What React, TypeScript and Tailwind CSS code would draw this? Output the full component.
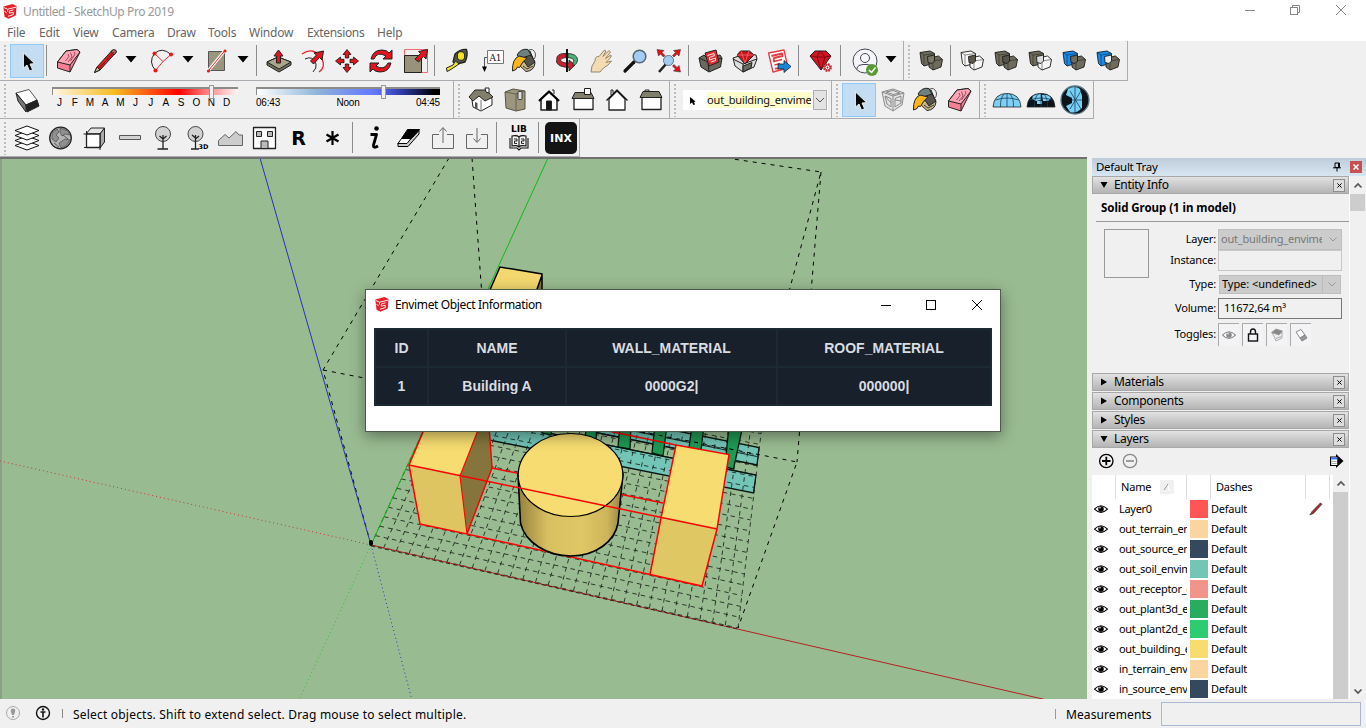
import React from "react";

type Kids = { children?: React.ReactNode };

/* ---------- toolbar primitives ---------- */
function Ico({ c = "", children }: Kids & { c?: string }) {
  return (
    <svg viewBox="0 0 34 34" className={`h-[34px] w-[34px] shrink-0 ${c}`} fill="none" stroke="#222" strokeWidth="1" strokeLinejoin="round">
      {children}
    </svg>
  );
}
function Grip({ c = "" }: { c?: string }) {
  return (
    <svg viewBox="0 0 10 36" className={`h-9 w-[10px] shrink-0 ${c}`}>
      <path d="M5 2V35" stroke="#bdbdbd" strokeWidth="2" strokeDasharray="2 2" />
    </svg>
  );
}
function Sep({ c = "w-2" }: { c?: string }) {
  return (
    <div className={`h-8 shrink-0 pl-0.5 ${c}`}>
      <div className="h-[31px] w-px bg-[#8c8c8c]" />
    </div>
  );
}
function Down({ c = "" }: { c?: string }) {
  return (
    <svg viewBox="0 0 18 20" className={`h-5 w-[18px] shrink-0 ${c}`}>
      <path d="M3.500 5H14.500L9 11.500Z" fill="#000" />
    </svg>
  );
}
const Bar = ({ c, children }: Kids & { c: string }) => (
  <div className={`flex h-full shrink-0 items-center border-r border-b border-[#a9acb0] pt-px ${c}`}>{children}</div>
);

/* ---------- icons ---------- */
const Logo = ({ c }: { c: string }) => (
  <svg viewBox="0 0 14 15" className={c}>
    <path d="M0.300 2.500L9.500 0L13.500 2L12.800 11.500L5.500 14.800L1.500 12.800Z" fill="#e4202a" />
    <path d="M0.800 3.500L4.500 5.200L13 3.200M4.500 5.200V7.500M10.500 5.800L6.300 7V9.200L10.300 8.300V10.600L5 12.300M1.500 7.500L3.500 8.500" stroke="#fff" strokeWidth=".9" fill="none" />
  </svg>
);
const Pointer = ({ c = "" }: { c?: string }) => (
  <div className={`h-[34px] w-[34px] shrink-0 border border-[#90c8f6] bg-[#c4ddf3] ${c}`}>
    <svg viewBox="0 0 32 32" className="h-8 w-8">
      <path d="M12.500 8V23L16 20L18.500 26L21.500 24.700L19 19L23.500 18.600Z" fill="#000" stroke="#fff" strokeWidth=".8" />
    </svg>
  </div>
);
const Eraser = ({ c = "" }: { c?: string }) => (
  <Ico c={c}>
    <path d="M15 7L26 5.500L29 8L19 28L6.500 24V18Z" fill="#f77f95" />
    <path d="M15 7L26 5.500L29 8L19 21L6.500 18Z" fill="#fda3b5" />
    <path d="M19 21V28" />
    <path d="M14.500 17L18 12.500L17 10M17 18L21 13L19.500 8.500M19.500 17L24 10L23 8" stroke="#7c3847" strokeWidth=".8" />
  </Ico>
);
const Bucket = ({ c = "" }: { c?: string }) => (
  <Ico c={c}>
    <ellipse cx="24" cy="11" rx="4.500" ry="5.500" stroke="#555" />
    <path d="M13 9L23 7L28 19Q27 27 19 27.500L12 21Z" fill="#c9b98a" />
    <path d="M10 11Q14 4 21 5.500L25 13L16 18Z" fill="#6f8080" />
    <path d="M15 14L24 11L28 18L21 23Z" fill="#57534a" />
    <path d="M16 22L20 25L26 22" stroke="#3b372c" />
    <path d="M5.500 27Q5 15 12 12L20 14Q16 17 14 21Q13 25 10.500 23Q10 26 5.500 27Z" fill="#fdb515" />
  </Ico>
);
const Arc4 = () => (
  <g fill="#e5131d" stroke="#111" strokeWidth=".8">
    <path d="M17 5.500L21 10.500H18.700V14H15.300V10.500H13Z" />
    <path d="M17 28.500L21 23.500H18.700V20H15.300V23.500H13Z" />
    <path d="M5.500 17L10.500 13V15.300H14V18.700H10.500V21Z" />
    <path d="M28.500 17L23.500 13V15.300H20V18.700H23.500V21Z" />
  </g>
);
function Solids({ a, b, i, c = "" }: { a: string; b: string; i: string; c?: string }) {
  return (
    <Ico c={c}>
      <g stroke="#1c1c18" strokeWidth=".9">
        <path d="M6 8.500L16 7L20.500 9.500V19L10 22L7.500 19.500Z" fill={a} />
        <path d="M15 14L24.500 12L28.500 15.500L27 23L19 26L15 23Z" fill={b} />
        <path d="M6 8.500L10 11L20.500 9.500M10 11V22M15 14L19 17L28.500 15.500M19 17V26" strokeWidth=".5" />
        <path d="M13.500 12.500L20.500 11V17L18 19.500L14 18.500Z" fill={i} />
      </g>
    </Ico>
  );
}
const Globe = ({ c = "", dark = false }: { c?: string; dark?: boolean }) => (
  <Ico c={c}>
    <path d="M3 24Q4 10.500 17 10.500Q30 10.500 31 24Z" fill={dark ? "#0b141a" : "#7fd0f5"} strokeWidth=".8" />
    {dark && <path d="M9 13Q12 11 17 11V17L12 18L8 16ZM18 12Q24 11 27 15L24 18H19ZM13 18H18V21H13Z" fill="#7fd0f5" stroke="none" />}
    <path d="M17 10.500V24M10.500 24Q10 15 14.500 10.500M23.500 24Q24 15 19.500 10.500M5.500 17Q17 13 28.500 17" stroke="#17425a" strokeWidth=".8" />
  </Ico>
);
const Tree = ({ d3 = false }: { d3?: boolean }) => (
  <Ico>
    <circle cx={d3 ? 15.500 : 17} cy="13" r="7.500" fill="#d2d2d2" stroke="#444" />
    <path d={d3 ? "M15.500 14V28M11 28H19M15.500 17L12 14M15.500 18L19 15" : "M17 14V28M11.500 28H22M17 18L13.500 15M17 18L20.500 15"} strokeWidth="1.300" />
    {d3 && <text x="18.500" y="27.500" fontSize="6.500" fontWeight="700" fill="#000" stroke="none" fontFamily="DejaVu Sans, sans-serif">3D</text>}
  </Ico>
);

function Row1() {
  return (
    <div className="flex h-10 items-stretch">
      <Bar c="w-[904px]">
        <Grip />
        <Pointer />
        <Sep c="w-[7px]" />
        <Eraser />
        <Ico c="ml-[3px]">
          <path d="M9 23L24.500 6L28 8.500L12 26L6.500 28.500Z" fill="#d81e25" />
          <path d="M23 7.500L25.500 5.500Q28.500 5.500 28.500 8L26 11Z" fill="#b66" />
          <path d="M9 23L12 26L6.500 28.500Z" fill="#cabf90" />
          <path d="M11 24.500L26 8" stroke="#811" />
        </Ico>
        <Down />
        <Ico c="ml-[5px]">
          <path d="M9.500 9.500Q17 2.500 26 10.500Q27 18 21 23.500Q16 27 10.500 27Q3 18 9.500 9.500" stroke="none" />
          <path d="M9.500 9.500Q17 2.500 26 10.500M9.500 9.500Q3 18 10.500 26.500" />
          <path d="M9.500 9.500L18 17.500L26 10.500M18 17.500L10.500 26.500" stroke="#e03038" />
          <g fill="#e11" stroke="none"><circle cx="9.500" cy="9.500" r="2" /><circle cx="26" cy="10.500" r="2" /><circle cx="10.500" cy="26.500" r="2" /></g>
        </Ico>
        <Down />
        <Ico c="ml-[3px]">
          <rect x="8.500" y="7.500" width="16" height="19" fill="#9a967e" stroke="#555" />
          <path d="M8.500 26.500L24.500 7" stroke="#fff" strokeWidth="3" />
          <path d="M8.500 26.500L24.500 7" stroke="#e22" />
          <g fill="#e11" stroke="none"><circle cx="8.500" cy="27" r="1.600" /><circle cx="25" cy="7" r="1.600" /></g>
        </Ico>
        <Down />
        <Sep c="ml-0.5 w-2" />
        <Ico>
          <path d="M5 18L16 13L29 18V21L17 28L5 21Z" fill="#716d5c" />
          <path d="M5 18L16 13L29 18L17 25Z" fill="#aaa68d" />
          <path d="M16.500 6L21 12H18.500V19H14.500V12H12Z" fill="#e5131d" />
        </Ico>
        <Ico>
          <path d="M6 10Q18 2 26 15Q30 23 23 28" stroke="#e5252d" strokeWidth="1.300" />
          <path d="M9 15Q17 11 20 20Q21 24 17 28" />
          <path d="M27.500 7L26 16L23.500 13.500L17.500 20L14.500 17L20.500 11L18 9Z" fill="#e5131d" />
        </Ico>
        <Ico><Arc4 /></Ico>
        <Ico>
          <g fill="#e5131d">
            <path d="M7 15Q9 6 18 6Q23 6 25 9L28 6V15H19L22 12Q13 7 10 15Z" />
            <path d="M27 19Q25 28 16 28Q11 28 9 25L6 28V19H15L12 22Q20 27 24 19Z" />
          </g>
        </Ico>
        <Ico>
          <rect x="6.500" y="5.500" width="23" height="23" stroke="#ef6b70" />
          <rect x="6.500" y="11.500" width="17" height="17" fill="#97937b" />
          <path d="M29.500 5.500L28 15L25.500 12.500L20.500 18L17 15L22.500 9.500L20.500 7.500Z" fill="#e5131d" />
        </Ico>
        <Sep c="w-[9px]" />
        <Ico>
          <path d="M14 10Q19 5 25.500 5.500Q27.500 11 24 18L16 20L12 18Z" fill="#55554a" strokeWidth="1.300" />
          <ellipse cx="20" cy="12" rx="3.700" ry="4.300" fill="#f3e51c" />
          <path d="M14.500 17L18 20L9 26L6 27.500L5.500 24L12 21Z" fill="#f5e711" />
        </Ico>
        <Ico>
          <rect x="12.500" y="6.500" width="16" height="13" fill="#fff" stroke="#777" />
          <text x="14.500" y="16.500" fontSize="9" fill="#111" stroke="none" fontFamily="DejaVu Serif, serif" textLength="12">A1</text>
          <path d="M12 13.500H9.500V23" stroke="#555" /><path d="M7 22.500H12L9.500 28Z" fill="#000" stroke="none" />
        </Ico>
        <Bucket c="-ml-0.5" />
        <Sep c="w-[9px]" />
        <Ico>
          <path d="M7 13Q9 9 16 9.500V13.500Q11 14 10.500 16Q11 19 19 19V16L25 21L19 27V23.500Q8 23 6.500 18Z" fill="#c9202e" strokeWidth=".8" />
          <path d="M18 9.500Q27 10 27.500 15.500Q27.500 20 23 22V18.500Q24.500 17 23.500 15.500Q22 14 18 13.500Z" fill="#4bb274" strokeWidth=".8" />
          <path d="M17 5V28" stroke="#111" strokeWidth="2" />
        </Ico>
        <Ico>
          <path d="M7 28L8 22L11 17Q11 12 15 12.500L20.500 6L22 7L19 12.500L25 6.500L26.500 8L21.500 14.500L27 11V13L22 18.500L27.500 17Q24 22 19.500 24L16 28Z" fill="#f3dbb4" stroke="#8a7a60" strokeWidth=".9" />
        </Ico>
        <Ico>
          <path d="M16 18L7 27" stroke="#111" strokeWidth="3.200" strokeLinecap="round" />
          <circle cx="21.500" cy="12.500" r="6.300" fill="#a3cdf3" stroke="#526576" strokeWidth="1.500" />
        </Ico>
        <Ico>
          <path d="M14 20L7 28" strokeWidth="2.500" />
          <circle cx="16.500" cy="16.500" r="5" fill="#a3cdf3" stroke="#607487" />
          <g fill="#e5131d" strokeWidth=".5">
            <path d="M5 5.500L12 6.500L10 8.500L13 11.500L11.500 13L8.500 10L6.500 12Z" /><path d="M28.500 5.500L21.500 6.500L23.500 8.500L20.500 11.500L22 13L25 10L27 12Z" />
            <path d="M28.500 28L21.500 27L23.500 25L20.500 22L22 20.500L25 23.500L27 21.500Z" />
          </g>
        </Ico>
        <Sep />
        <Ico>
          <path d="M5 14L10 11L13 14L26 11L28 14L26.500 23L15 28L7 23Z" fill="#6b695d" />
          <path d="M5 14L14 18L28 14M14 18L15 28" />
          <path d="M11 9L22 6L25 18L15 22Z" fill="#e32d34" />
          <path d="M13.500 11.500L20 9.500L20.500 11.500L15.500 13.500V16L21.500 14V16.500L17 18" stroke="#fff" strokeWidth=".9" />
        </Ico>
        <Ico>
          <path d="M5 14L11 12L13 9L28 11L29 15L26 23L15 28L7 22Z" fill="#ddd" />
          <path d="M9 11L12.500 7H21.500L26 11L17 20Z" fill="#c9141e" />
          <path d="M9 11H26M13 7L17 19L21 7" stroke="#fc7a7a" strokeWidth=".7" />
          <path d="M5 15L15 20L29 15M15 20V28" /><path d="M15 22L24 18.500L23 24L15 28Z" fill="#6a6a60" />
        </Ico>
        <Ico>
          <path d="M6.500 9L22 6L26 24L11 28Z" fill="#fff" stroke="#e43b42" strokeWidth="1.300" />
          <path d="M9.500 12L20 9.500L20.500 12L12 14V17.500L20 15.500M12.500 21L18 19.500M13 24.500H17" stroke="#e43b42" strokeWidth="1.800" />
          <path d="M16 20H22V16.500L29 22.500L22 28.500V25H16Z" fill="#1685dc" strokeWidth=".8" />
        </Ico>
        <Sep />
        <Ico>
          <path d="M6 12L11 7H22L27 12L17 26Z" fill="#cd1722" />
          <path d="M6 12L13 13L17 26L21 13L27 12M13 13L16 7L21 13Z" stroke="#78000c" strokeWidth=".8" />
          <circle cx="23.500" cy="23.500" r="3.300" fill="#fff" stroke="#c22a33" strokeWidth="2.200" strokeDasharray="1.700 .9" /><circle cx="23.500" cy="23.500" r="2.600" stroke="#c22a33" /><circle cx="23.500" cy="23.500" r="1" fill="#c22" stroke="none" />
        </Ico>
        <Sep c="w-[10px]" />
        <Ico>
          <circle cx="17" cy="17" r="12" fill="#f6f6f8" stroke="#44475c" />
          <circle cx="17" cy="14" r="4.500" stroke="#44475c" />
          <path d="M9 25.500V24Q10 20.500 15 20.500H19Q24 20.500 25 24" stroke="#44475c" />
          <circle cx="24" cy="26" r="6" fill="#5a9935" stroke="none" />
          <path d="M21 26L23.500 28.500L27.500 23.500" stroke="#fff" strokeWidth="1.500" />
        </Ico>
        <Down />
      </Bar>
      <Bar c="w-[224px]">
        <Grip />
        <Solids a="#6f6c5d" b="#6f6c5d" i="#7d7a69" />
        <Sep c="w-[7px]" />
        <Solids a="#f8f8f8" b="#f8f8f8" i="#5a584b" />
        <Solids a="#6f6c5d" b="#6f6c5d" i="#55534a" />
        <Solids a="#6f6c5d" b="#f8f8f8" i="#ddd" />
        <Solids a="#188bf0" b="#6f6c5d" i="#6f6c5d" />
        <Solids a="#188bf0" b="#6f6c5d" i="#eee" />
      </Bar>
    </div>
  );
}

const months = ["J", "F", "M", "A", "M", "J", "J", "A", "S", "O", "N", "D"];

function Row2() {
  return (
    <div className="flex h-[38px] items-stretch">
      <Bar c="w-[454px]">
        <Grip />
        <Ico>
          <path d="M6 10L19 6.500L27 17L16 22Z" fill="#fff" stroke="#555" />
          <path d="M6 10L16 22V29L8 18Z" fill="#777" /><path d="M16 22L27 17L29 23L17 29Z" fill="#222" />
        </Ico>
        <div className="ml-2 w-[186px] shrink-0 pb-1">
          <div className="relative h-2 border-t-2 border-l border-[#8b8b8b]">
            <div className="h-full bg-[linear-gradient(90deg,#fff6e4,#f5bd20_33%,#f00_68%,#ff9090_85%,#fff5f5)]" />
            <div className="absolute -top-1 left-[156px] h-[14px] w-[5px] border border-[#999] bg-[#f0f0f0]" />
          </div>
          <div className="flex pt-0.5 font-['Liberation_Sans',sans-serif] text-[10px] leading-3 font-medium text-black">
            {months.map((m, i) => <span key={i} className="w-[15.200px] shrink-0 text-center">{m}</span>)}
          </div>
        </div>
        <div className="ml-[18px] w-[184px] shrink-0 pb-1">
          <div className="relative h-2 border-t-2 border-l border-[#8b8b8b]">
            <div className="h-full bg-[linear-gradient(90deg,#fff,#8fb4d9_33%,#6074ff_65%,#2b36a0_80%,#000_97%)]" />
            <div className="absolute -top-1 left-[124px] h-[14px] w-[5px] border border-[#999] bg-[#f0f0f0]" />
          </div>
          <div className="flex justify-between pt-0.5 font-['Liberation_Sans',sans-serif] text-[10px] leading-3 tracking-[-0.200px] text-black">
            <span>06:43</span><span>Noon</span><span>04:45</span>
          </div>
        </div>
      </Bar>
      <Bar c="w-[216px]">
        <Grip />
        <Ico>
          <path d="M8 17L14 10L25 11L28 16V22L17 28L9 24Z" fill="#fff" />
          <path d="M5 14L11 7L22 7L29 14L21 18L15 13L9 18Z" fill="#817e6b" />
          <path d="M21 5H25V10L22 9Z" fill="#fff" /><path d="M17 17V28" stroke="#777" /><path d="M11 19V25L13.500 26V20Z" fill="#555" stroke="none" />
        </Ico>
        <Ico>
          <path d="M7 9L15 6L27 8V26L18 28L8 25Z" fill="#9b967d" stroke="#55523f" /><path d="M7 9L18 11L27 8M18 11V28" stroke="#65624f" />
          <rect x="20" y="8.500" width="4" height="8" rx="1" fill="#ddd" strokeWidth=".8" />
        </Ico>
        <Ico>
          <path d="M9 16L17 9L25 16V27H9Z" fill="#fff" strokeWidth="1.500" /><path d="M7 18L17 8.500L27 18" stroke="#000" strokeWidth="2.200" />
          <rect x="14.500" y="18" width="5" height="9" fill="#111" /><path d="M20 7H22V11" />
        </Ico>
        <Ico>
          <rect x="8" y="15" width="19" height="11.500" fill="#fff" strokeWidth="1.300" /><path d="M9 9.500H25L28 15.500H6Z" fill="#817e6b" />
          <rect x="18.500" y="5.500" width="6" height="6" fill="#fff" />
        </Ico>
        <Ico>
          <path d="M9 16L17 8L25 16V27H9Z" fill="#fff" strokeWidth="1.300" /><path d="M6.500 17.500L17 7L27.500 17.500" stroke="#111" strokeWidth="1.300" /><path d="M11 12V7H13V10" />
        </Ico>
        <Ico>
          <rect x="8" y="14" width="19" height="12.500" fill="#fff" strokeWidth="1.300" /><path d="M9 8.500H25L28 14.500H6Z" fill="#817e6b" /><path d="M11 8.500V7H15V8.500" />
        </Ico>
      </Bar>
      <Bar c="w-[162px]">
        <Grip />
        <div className="ml-[3px] flex h-5 w-[145px] shrink-0 items-center bg-white">
          <svg viewBox="0 0 24 20" className="h-5 w-6 shrink-0"><path d="M7 7V14L9 12.500L10.500 15L12 14.500L11 12L12.500 11.500Z" fill="#000" /></svg>
          <div className="h-4 w-[104px] overflow-hidden bg-[#ffffcc] text-[11px] leading-4 tracking-[-0.150px] whitespace-nowrap text-[#111]">out_building_envimet</div>
          <div className="ml-0.5 flex h-5 w-[14px] items-center justify-center border border-[#adadad] bg-[#e3e3e3]">
            <svg viewBox="0 0 10 6" className="h-1.5 w-2.5"><path d="M1 1L5 5L9 1" stroke="#555" fill="none" /></svg>
          </div>
        </div>
      </Bar>
      <Bar c="w-[148px]">
        <Grip />
        <Pointer />
        <Ico>
          <g stroke="#8a8a8a"><path d="M6 9L17 6L28 10L26 22L17 28L9 23Z" fill="#e4e4e4" /><path d="M6 9L17 13L28 10M17 13V28M9 13L15 15.500V24L11 21ZM19 15.500V24L25 20V13ZM10 9L17 7.500L24 10L17 11.500ZM9 13L15 20M19 17L25 18" /></g>
        </Ico>
        <Bucket c="-ml-0.5" />
        <Eraser />
      </Bar>
      <Bar c="w-[114px]">
        <Grip />
        <Globe />
        <Globe dark />
        <Ico>
          <circle cx="17" cy="17" r="14" fill="#0b141a" stroke="#5b7885" strokeWidth="1.300" />
          <path d="M10 6Q17 2 22 6L24 13V25Q18 31 12 29L8 23L14 20V15L8 12Z" fill="#76cff4" stroke="none" />
          <path d="M17 4V30M14 17H24M12 8L23 26M23 8L12 26" stroke="#17425a" strokeWidth=".8" />
        </Ico>
      </Bar>
    </div>
  );
}

function Row3() {
  return (
    <div className="flex h-[38px] items-stretch">
      <Bar c="w-[580px]">
        <Grip />
        <Ico>
          <g fill="#fff" stroke="#111">
            <path d="M5 24.500L17 20L29 24.500L17 29Z" /><path d="M5 19.500L17 15L29 19.500L17 24Z" /><path d="M5 14.500L17 10L29 14.500L17 19Z" /><path d="M5 9.500L17 5L29 9.500L17 14Z" />
          </g>
        </Ico>
        <Ico>
          <circle cx="16.500" cy="17" r="10.800" fill="#b4b4b4" strokeWidth="1.300" />
          <path d="M8 12L13 8L15 11L12 14L15 17L12 21L8 18ZM16 7L24 10L26 14L21 13L18 15L16 11ZM15 22L21 18L26 19L22 25L17 27Z" fill="#8f8f8f" stroke="#555" strokeWidth=".8" />
          <path d="M19 14L24 18M10 22L15 26" stroke="#444" strokeWidth=".8" />
        </Ico>
        <Ico>
          <path d="M8 13L13 7H26.500L22 13Z" fill="#e4e4e4" /><path d="M22 13L26.500 7V21L22 27Z" fill="#aaa" />
          <rect x="8.500" y="13" width="13.500" height="13.500" fill="#fff" strokeWidth="1.300" /><path d="M5.500 13H10M8.500 10V15M6 26.500H10M22 29V25" />
        </Ico>
        <Ico><rect x="7.500" y="14.500" width="21" height="4" fill="#d2d2d2" stroke="#555" /></Ico>
        <Tree />
        <Tree d3 />
        <Ico><path d="M4.500 19.500L11 13.500L15 17L22 10.500L25 14H28.500V24.500H4.500Z" fill="#ccc" stroke="#666" /></Ico>
        <Ico>
          <rect x="5.500" y="6.500" width="22" height="21" fill="#fff" strokeWidth="1.300" />
          <g fill="#bbb"><rect x="8.500" y="10.500" width="5" height="5" /><rect x="19.500" y="10.500" width="5" height="5" /><rect x="13" y="20" width="7" height="7.500" /></g>
        </Ico>
        <div className="w-[34px] shrink-0 pr-px text-center font-['DejaVu_Sans',sans-serif] text-[19px] leading-8 font-bold text-black">R</div>
        <Ico><path d="M16.500 10V24M10.500 13.500L22.500 20.500M22.500 13.500L10.500 20.500" stroke="#000" strokeWidth="2.200" /></Ico>
        <Sep />
        <Ico><circle cx="18.500" cy="7.500" r="2.300" fill="#000" stroke="none" /><path d="M12.500 13.500H18.500L15.500 24Q15 28 20 25" stroke="#000" strokeWidth="2.800" /></Ico>
        <Ico>
          <path d="M15 21.500L27 9.500V13L16 25.500L6 25.500V22Z" fill="#ccc" stroke="#000" /><path d="M15.500 8.500H27.500L19.500 17.500H9.500Z" fill="#000" stroke="#000" /><path d="M9.500 17.500H19L15 22.500H6Z" fill="#fff" stroke="#000" />
        </Ico>
        <Ico><path d="M13 13.500H6.500V27.500H27.500V13.500H21M17 22V7M13.500 10.500L17 6.500L20.500 10.500" stroke="#666" /></Ico>
        <Ico><path d="M13 13.500H6.500V27.500H27.500V13.500H21M17 7V21M13.500 17.500L17 21.500L20.500 17.500" stroke="#666" /></Ico>
        <Sep c="w-[7px]" />
        <div className="flex w-[34px] shrink-0 flex-col items-center pl-0.5">
          <span className="font-['DejaVu_Sans',sans-serif] text-[9px] leading-[9px] font-bold text-black">LIB</span>
          <svg viewBox="0 0 22 17" className="h-[17px] w-[22px]" fill="none" stroke="#111">
            <path d="M4 2Q9 1 11 3Q13 1 18 2V12Q13 11 11 13Q9 11 4 12ZM2 4V14H9L11 16L13 14H20V4M11 3V13" strokeWidth="1.100" />
            <path d="M6 5H9V7H6.500V9.500H9M13 5H16V7H13.500V9.500H16" strokeWidth=".9" />
          </svg>
        </div>
        <Sep c="ml-px w-[9px]" />
        <div className="flex h-8 w-8 shrink-0 items-center justify-center rounded-[5px] bg-[#141414] pt-0.5 font-['DejaVu_Sans',sans-serif] text-[11px] font-bold text-white">INX</div>
      </Bar>
    </div>
  );
}

/* ---------- 3D viewport ---------- */
const COLS = 29;
const gridPoint = (u: number, v: number): [number, number] => {
  const fx = 371 + 367 * u, fy = 545 + 83 * u;
  const bx = 425 + 329 * u, by = 427 + 66 * u;
  return [fx + (bx - fx) * v, fy + (by - fy) * v];
};
function gridPath() {
  let d = "";
  for (let i = 0; i <= COLS; i++) {
    const [a, b] = gridPoint(i / COLS, 0), [e, f] = gridPoint(i / COLS, 1.45);
    d += `M${a} ${b}L${e} ${f}`;
  }
  for (let j = 0; j <= 18; j++) {
    const [a, b] = gridPoint(0, j / 12.5), [e, f] = gridPoint(1, j / 12.5);
    d += `M${a} ${b}L${e} ${f}`;
  }
  return d;
}
function Scene() {
  return (
    <svg viewBox="0 157 1087 543" className="h-[543px] w-[1087px] shrink-0">
      <defs>
        <linearGradient id="cyl" x1="0" x2="1">
          <stop offset="0" stopColor="#94803f" /><stop offset=".28" stopColor="#d8bf60" /><stop offset=".6" stopColor="#e0c765" /><stop offset=".85" stopColor="#cdb55a" /><stop offset="1" stopColor="#94803f" />
        </linearGradient>
      </defs>
      <rect x="0" y="157" width="1087" height="543" fill="#99bb91" />
      <g fill="#72c5b7" stroke="#0a1512" strokeWidth="1.400">
        <path d="M489 421L756 475L753.500 493L489 440Z" />
        <path d="M489 393L759 447.500L757 465L489 411Z" />
      </g>
      <path d={gridPath()} stroke="#1a221a" strokeWidth=".85" strokeDasharray="4.500 4" fill="none" />
      <g fill="none" stroke="#0a1512" strokeWidth="1.200">
        <path d="M489 421L756 475M489 411L757 465M489 401L757 456.500" strokeOpacity=".85" />
      </g>
      <g fill="#1f9954" stroke="#04180c" strokeWidth="1.300">
        <path d="M543 425H552L551 435L542 433Z" /><path d="M587 425H597L596 439L585 437Z" />
        <path d="M620 425H631L630 449L618 447Z" /><path d="M655 425H667L663 456L652 453Z" />
        <path d="M692 425H704L701 450L689 448Z" /><path d="M729 425H743L733.500 469L725 467Z" />
      </g>
      <g fill="none" stroke="#000" strokeWidth="1" strokeDasharray="4 5">
        <path d="M449 158L323 370L371 545M323 370L797 462L738 628M472 158L483 310M726 158L821 172L760 400M821 172L797 462" />
      </g>
      <path d="M371 545L548 158" stroke="#11b81a" fill="none" />
      <path d="M260 158L371 545" stroke="#2334bb" fill="none" />
      <path d="M371 545L1047 700" stroke="#b32222" fill="none" />
      <path d="M0 461L371 545" stroke="#cb3434" strokeDasharray="1 3" />
      <path d="M371 545L299 700" stroke="#27c32c" strokeDasharray="1 3" />
      <path d="M371 545L412 700" stroke="#2338cc" strokeDasharray="1 3" />
      <path d="M371 546L738 629" stroke="#111" strokeDasharray="4 3" strokeWidth=".8" />
      <ellipse cx="371" cy="543" rx="2" ry="3" />
      <path d="M500 267L542 274V300H487Z" fill="#f2d86e" /><path d="M542 275V300H533Z" fill="#83743c" />
      <path d="M489 292L500 267L542 274V292M542 275L536 292" stroke="#000" strokeWidth="1.500" fill="none" />
      <path d="M467 534L702 586" stroke="#f00" strokeWidth="1.500" />
      <path d="M492 468L663 503M560 421L676 445" stroke="#f00" strokeWidth="1.500" />
      <path d="M409 465L426 425H480L460 476Z" fill="#f6dc71" />
      <path d="M480 425H489L492 468L467 534L460 476Z" fill="#85753c" />
      <path d="M409 465L460 476L467 534L420 524Z" fill="#dec561" />
      <path d="M426 425L409 465L420 524L467 534L492 468L489 425" fill="none" stroke="#f00" strokeWidth="1.500" />
      <path d="M460 476L480 425M460 476L467 534" fill="none" stroke="#f00" strokeWidth="1.100" />
      <path d="M518 474L520.500 523C525 543 548 556 571 556C596 556 615 541 618 523L623 474Z" fill="url(#cyl)" stroke="#000" strokeWidth="1.600" />
      <ellipse cx="570.500" cy="475" rx="52.300" ry="41.500" fill="#f6dc71" stroke="#000" strokeWidth="1.200" />
      <path d="M676 445L729 454.500L717 529L661 518Z" fill="#f6dc71" />
      <path d="M661 518L717 529L702 586L650 574.500Z" fill="#dfc764" />
      <path d="M676 445L729 454.500L717 529L702 586L650 574.500L661 518ZM409 465L717 529" fill="none" stroke="#f00" strokeWidth="1.500" />
      <path d="M1 157V700" stroke="#808080" strokeWidth="1" /><path d="M0 158H1087" stroke="#707070" strokeWidth="2" />
    </svg>
  );
}

function Dialog() {
  const th = "border-2 border-[#1c2a35] p-0 font-bold";
  return (
    <div className="absolute top-[289px] left-[365px] flex h-[143px] w-[636px] flex-col border border-[#4d5b4b] bg-white shadow-[0_4px_14px_rgba(0,0,0,0.4)]">
      <div className="flex h-[29px] items-center pl-[9px]">
        <Logo c="h-[15px] w-[14px]" />
        <span className="ml-[6px] text-[12px] tracking-[-0.370px] text-black">Envimet Object Information</span>
        <svg viewBox="0 0 112 16" className="mr-[13px] ml-auto h-4 w-[112px]" fill="none" stroke="#000">
          <path d="M6 8.500H16" /><rect x="51.500" y="3.500" width="9" height="9" /><path d="M97 3L107 13M107 3L97 13" />
        </svg>
      </div>
      <table className="mt-[9px] ml-2 h-[78px] w-[618px] table-fixed border-collapse bg-[#18202b] text-center font-['Liberation_Sans',sans-serif] text-[14px] leading-4 text-[#d9dce0]">
        <colgroup><col className="w-[53px]" /><col className="w-[138px]" /><col className="w-[211px]" /><col /></colgroup>
        <tbody>
          <tr className="h-[38px]"><th className={th}>ID</th><th className={th}>NAME</th><th className={th}>WALL_MATERIAL</th><th className={th}>ROOF_MATERIAL</th></tr>
          <tr className="h-[38px]"><td className={th}>1</td><td className={th}>Building A</td><td className={th}>0000G2|</td><td className={th}>000000|</td></tr>
        </tbody>
      </table>
    </div>
  );
}

/* ---------- tray ---------- */
function Section({ title, open = false }: { title: string; open?: boolean }) {
  return (
    <div className="mb-px flex h-[18px] shrink-0 items-center border border-[#a8a8a8] bg-gradient-to-b from-[#e2e2e2] to-[#b4b4b4] pl-[7px]">
      <svg viewBox="0 0 8 8" className="h-2 w-2"><path d={open ? "M0.500 1H7.500L4 7Z" : "M1 0.500L7 4L1 7.500Z"} fill="#000" /></svg>
      <span className="ml-[6px] text-[12px] leading-4 tracking-[-0.300px] text-black">{title}</span>
      <div className="mr-[3px] ml-auto flex h-[13px] w-[12px] items-center justify-center border border-[#8e8e8e] bg-[#dedede]">
        <svg viewBox="0 0 6 6" className="mt-px h-[5px] w-[5px]"><path d="M.5 .5L5.500 5.500M5.500 .5L.5 5.500" stroke="#000" strokeWidth="1.200" /></svg>
      </div>
    </div>
  );
}
const Eye = ({ c = "text-black" }: { c?: string }) => (
  <svg viewBox="0 0 14 10" className={`h-[10px] w-[14px] ${c}`}>
    <path d="M.5 5.200Q7-1.800 13.500 5.200Q7 11.500 .5 5.200Z" fill="#fff" stroke="currentColor" strokeWidth="1.100" />
    <circle cx="7" cy="5" r="2.800" fill="currentColor" /><circle cx="6" cy="3.800" r=".8" fill="#fff" />
  </svg>
);
const Chevron = ({ up = false, c }: { up?: boolean; c: string }) => (
  <svg viewBox="0 0 10 7" className="h-[7px] w-[10px]"><path d={up ? "M1.500 5.500L5 2L8.500 5.500" : "M1.500 1.500L5 5L8.500 1.500"} className={c} fill="none" /></svg>
);
function Field({ label, c, children }: Kids & { label: string; c: string }) {
  return (
    <div className={`flex items-center ${c}`}>
      <span className="mr-[2px] w-[60px] text-right text-[11px] tracking-[-0.150px] whitespace-nowrap text-black">{label}</span>
      {children}
    </div>
  );
}
const layers = [
  ["Layer0", "bg-[#ff5555]"], ["out_terrain_envimet", "bg-[#fad5a0]"], ["out_source_envimet", "bg-[#34495e]"],
  ["out_soil_envimet", "bg-[#73c6b6]"], ["out_receptor_envimet", "bg-[#f1948a]"], ["out_plant3d_envimet", "bg-[#28ad60]"],
  ["out_plant2d_envimet", "bg-[#2ecc71]"], ["out_building_envimet", "bg-[#f7dc6f]"], ["in_terrain_envimet", "bg-[#fad5a0]"],
  ["in_source_envimet", "bg-[#34495e]"],
];
function Tray() {
  return (
    <div className="ml-[5px] flex min-w-0 flex-1 flex-col pt-px">
      <div className="flex h-[18px] shrink-0 items-center bg-gradient-to-b from-[#bfcddb] to-[#d8e6f2] pl-1">
        <span className="text-[11.500px] tracking-[-0.300px] text-black">Default Tray</span>
        <svg viewBox="0 0 8 10" className="mr-[9px] ml-auto h-[10px] w-2" fill="none" stroke="#000"><path d="M2 1H6.500V5.500H2ZM5.500 1V5M0 5.800H8M4 6V9.500" /></svg>
        <div className="mr-1 flex h-3 w-3 items-center justify-center bg-[#c75050]"><svg viewBox="0 0 6 6" className="h-1.5 w-1.5"><path d="M.5 .5L5.500 5.500M5.500 .5L.5 5.500" stroke="#fff" strokeWidth="1.500" /></svg></div>
      </div>
      <div className="flex min-h-0 flex-1">
        <div className="flex w-[257px] shrink-0 flex-col">
          <Section title="Entity Info" open />
          <div className="flex h-[178px] shrink-0 flex-col">
            <div className="ml-1 h-[27px] border-b border-[#999] pl-[5px] text-[11.500px] leading-[25px] font-bold tracking-[-0.050px] whitespace-nowrap text-black">Solid Group (1 in model)</div>
            <div className="flex">
              <div className="mt-[7px] ml-3 h-[49px] w-[45px] shrink-0 border border-[#999]" />
              <div className="mt-[7px] ml-[7px] flex flex-col">
                <Field label="Layer:" c="h-[21px]">
                  <div className="flex h-[21px] w-[124px] items-center border border-[#bfbfbf] bg-[#cccccc] pl-[2px]">
                    <span className="w-[101px] shrink-0 overflow-hidden text-[11px] tracking-[-0.200px] whitespace-nowrap text-[#777]">out_building_envimet</span>
                    <div className="ml-[6px]"><Chevron c="stroke-[#999]" /></div>
                  </div>
                </Field>
                <Field label="Instance:" c="h-[21px]"><div className="h-[21px] w-[124px] border border-[#c8c8c8] bg-[#f0f0f0]" /></Field>
                <Field label="Type:" c="mt-1 h-[19px]">
                  <div className="ml-px flex h-[19px] w-[122px] items-center border border-[#bfbfbf] bg-[#cccccc] pl-[2px]">
                    <span className="w-[100px] text-[11px] tracking-[-0.050px] whitespace-nowrap text-black">Type: &lt;undefined&gt;</span>
                    <div className="flex h-[17px] flex-1 items-center justify-center border-l border-[#bbb]"><Chevron c="stroke-[#999]" /></div>
                  </div>
                </Field>
                <Field label="Volume:" c="mt-1 h-[21px]"><div className="h-[21px] w-[124px] border border-[#777] bg-[#f0f0f0] pl-[5px] text-[11px] leading-[18px] tracking-[-0.200px] text-black">11672,64 m³</div></Field>
                <Field label="Toggles:" c="mt-1 h-[23px]">
                  <div className="flex gap-[3px]">
                    {[0, 1, 2, 3].map((n) => (
                      <div key={n} className="flex h-[23px] w-[21px] items-center justify-center border-t border-l border-[#aaa] bg-[#f3f3f5]">
                        {n === 0 && <Eye c="text-[#888]" />}
                        {n === 1 && <svg viewBox="0 0 12 14" className="h-[14px] w-3" fill="none" stroke="#111" strokeWidth="1.400"><rect x="1.500" y="6" width="9" height="7" /><path d="M3.500 6V4Q3.500 1 6 1Q8.500 1 8.500 4V6" /></svg>}
                        {n === 2 && <svg viewBox="0 0 14 14" className="h-[14px] w-[14px]" stroke="#999" strokeWidth=".8"><path d="M2 5L4 8L6 13L12 10L12 4Z" fill="#eee" /><path d="M1.500 4.500L6 1L12.500 3L9 7Z" fill="#888" /><path d="M6 10.500L11 8.500" /></svg>}
                        {n === 3 && <svg viewBox="0 0 14 14" className="h-[14px] w-[14px]" stroke="#888"><path d="M2 4L7 1.500L11 7L6 10Z" fill="#fff" /><path d="M6 10L11 7L13 10L8 13Z" fill="#999" /></svg>}
                      </div>
                    ))}
                  </div>
                </Field>
              </div>
            </div>
          </div>
          <Section title="Materials" />
          <Section title="Components" />
          <Section title="Styles" />
          <Section title="Layers" open />
          <div className="flex h-[26px] shrink-0 items-center pb-0.5 pl-[6px]">
            <svg viewBox="0 0 40 16" className="h-4 w-10" fill="none" strokeWidth="1.300">
              <circle cx="8.300" cy="8" r="6.700" stroke="#000" /><path d="M8.300 3.800V12.200M4 8H12.500" stroke="#000" strokeWidth="1.800" />
              <circle cx="32" cy="8" r="6.700" stroke="#888" /><path d="M28 8H36" stroke="#888" strokeWidth="1.600" />
            </svg>
            <svg viewBox="0 0 14 14" className="mr-[5px] ml-auto h-[14px] w-[14px]"><path d="M6 0L13.500 7L6 14V12H0V2.500H6Z" fill="#000" /><rect x="1.200" y="3.500" width="6" height="7.500" fill="#fff" /><path d="M1.200 4.500H7.200" stroke="#37f" strokeWidth="2" /><path d="M2 7.500H6.500M2 9.500H6.500" stroke="#888" strokeWidth=".7" /></svg>
          </div>
          <div className="flex min-h-0 flex-1">
            <div className="flex w-[241px] shrink-0 flex-col overflow-hidden bg-white text-[11px] text-black">
              <div className="flex h-6 shrink-0 items-stretch leading-6">
                <div className="w-6 border-r border-[#ddd]" />
                <div className="flex w-[71px] items-center justify-between border-r border-[#ddd] pr-3 pl-[5px] tracking-[-0.200px]">Name
                  <svg viewBox="0 0 14 14" className="h-[14px] w-[14px]"><rect width="14" height="14" fill="#f0f0f0" /><path d="M4 10L8 4" fill="none" stroke="#999" /><path d="M8.500 5V10H11" fill="none" stroke="#fff" /></svg>
                </div>
                <div className="w-6 border-r border-[#ddd]" />
                <div className="w-[95px] border-r border-[#ddd] pl-[5px] tracking-[-0.250px]">Dashes</div>
                <div className="w-6 border-r border-[#ddd]" />
              </div>
              {layers.map(([n, color], i) => (
                <div key={n} className="flex h-5 shrink-0 items-center leading-5">
                  <div className="w-[27px] shrink-0 pl-[2px]"><Eye /></div>
                  <div className="w-[68px] shrink-0 overflow-hidden tracking-[-0.300px] whitespace-nowrap">{n}</div>
                  <div className={`ml-[3px] h-[18px] w-[18px] shrink-0 ${color}`} />
                  <div className="ml-[3px] w-[98px] tracking-[-0.250px]">Default</div>
                  {i === 0 && <svg viewBox="0 0 14 14" className="h-[14px] w-[14px]"><path d="M3 9.500L11.500 .8L13 2.300L4.500 11.500L.8 13Z" fill="#a52a30" stroke="#333" strokeWidth=".6" /></svg>}
                </div>
              ))}
              <div className="ml-[98px] h-px w-[18px] bg-[#73c6b6]" />
            </div>
            <div className="flex w-[15px] flex-col bg-[#f0f0f0]">
              <div className="flex h-[17px] shrink-0 items-center justify-center"><Chevron up c="stroke-[#555] stroke-[1.700]" /></div>
              <div className="flex-1 bg-[#cdcdcd]" />
            </div>
          </div>
        </div>
        <div className="flex w-[17px] flex-col border-l border-white bg-[#f0f0f0] pb-1">
          <div className="flex h-[18px] shrink-0 items-center justify-center"><Chevron up c="stroke-[#555] stroke-[1.700]" /></div>
          <div className="h-[17px] w-[15px] bg-[#cdcdcd]" />
          <div className="mt-auto flex justify-center"><Chevron c="stroke-[#555] stroke-[1.700]" /></div>
        </div>
      </div>
    </div>
  );
}

export default function App() {
  return (
    <div className="relative flex h-[728px] w-[1366px] flex-col overflow-hidden bg-[#f0f0f0] font-['Noto_Sans','Open_Sans',sans-serif]">
      <div className="flex h-6 shrink-0 items-center bg-white pl-[3px]">
        <Logo c="h-[15px] w-[14px] -mt-0.5" />
        <span className="ml-[6px] text-[12px] tracking-[-0.390px] text-[#999]">Untitled - SketchUp Pro 2019</span>
        <svg viewBox="0 0 112 16" className="mr-[15px] mb-1 ml-auto h-4 w-[112px]" fill="none" stroke="#888">
          <path d="M6 8.500H16" /><rect x="51.500" y="5.500" width="7" height="7" /><path d="M53.500 5V3.500H60.500V10.500H59M97 3L107 13M107 3L97 13" />
        </svg>
      </div>
      <div className="flex h-[17px] shrink-0 items-center bg-white pl-[7px] text-[12px] leading-4 tracking-[-0.200px] text-[#666]">
        <span className="w-8">File</span><span className="w-[34px]">Edit</span><span className="w-[39px]">View</span><span className="w-[55px]">Camera</span>
        <span className="w-[41px]">Draw</span><span className="w-[41px]">Tools</span><span className="w-[58px]">Window</span><span className="w-[70px] tracking-[-0.350px]">Extensions</span><span>Help</span>
      </div>
      <Row1 />
      <Row2 />
      <Row3 />
      <div className="flex h-[542px] shrink-0 overflow-hidden">
        <Scene />
        <Tray />
      </div>
      <div className="flex min-h-0 flex-1 items-center bg-[#f0f0f0] text-[12px] text-black">
        <svg viewBox="0 0 73 20" className="h-5 w-[73px] shrink-0" fill="none">
          <circle cx="13" cy="9" r="6.500" stroke="#aaa" /><path d="M11 8Q10 4.500 13 4.500Q16 4.500 15 8L14 11H12ZM12 12H14V13.500H12Z" fill="#999" />
          <circle cx="43" cy="9" r="6.500" stroke="#111" strokeWidth="1.400" /><circle cx="43" cy="5.500" r="1.200" fill="#111" /><path d="M40.500 8H45.500M43 8V13.500" stroke="#111" strokeWidth="1.600" />
          <path d="M62.500 5V14" stroke="#888" />
        </svg>
        <span className="pt-0.5 tracking-[0.200px]">Select objects. Shift to extend select. Drag mouse to select multiple.</span>
        <div className="ml-auto h-[10px] w-px bg-[#999]" />
        <span className="ml-[10px] w-[95px] pt-0.5 tracking-[0.100px]">Measurements</span>
        <div className="mr-[5px] h-6 w-[200px] border border-[#a9b8d3]" />
      </div>
      <Dialog />
    </div>
  );
}
